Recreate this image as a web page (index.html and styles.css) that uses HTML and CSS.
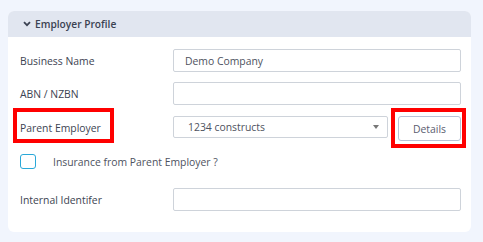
FILE: index.html
```html
<!DOCTYPE html>
<html>
<head>
<meta charset="utf-8">
<link rel="stylesheet" href="styles.css">
</head>
<body>
<div class="card">
  <div class="card-header">
    <svg class="chev" width="8" height="6" viewBox="0 0 8 6"><path d="M1 1.2 L4 4.2 L7 1.2" fill="none" stroke="#3b4252" stroke-width="1.8"/></svg>
    <span>Employer Profile</span>
  </div>
  <div class="card-body">
    <div class="row r1">
      <div class="label">Business Name</div>
      <div class="field"><div class="input">Demo Company</div></div>
    </div>
    <div class="row r2">
      <div class="label">ABN / NZBN</div>
      <div class="field"><div class="input"></div></div>
    </div>
    <div class="row r3">
      <div class="label hl-label">Parent Employer</div>
      <div class="field split">
        <div class="select"><span>1234 constructs</span><span class="caret"></span></div>
        <div class="hl-btn"><button class="btn">Details</button></div>
      </div>
    </div>
    <div class="check-row">
      <span class="checkbox"></span>
      <span class="check-label">Insurance from Parent Employer ?</span>
    </div>
    <div class="row">
      <div class="label">Internal Identifer</div>
      <div class="field"><div class="input"></div></div>
    </div>
  </div>
</div>
</body>
</html>
```
FILE: styles.css
```css
html, body { margin: 0; padding: 0; }
body {
  background: #f1f5fd;
  font-family: "Open Sans", "Noto Sans", sans-serif;
  font-size: 10.4px;
  color: #3d4452;
  padding: 11px 12px 10px 8px;
  width: 463px;
}
.card {
  background: #fff;
  border-radius: 6px;
  overflow: hidden;
}
.card-header {
  background: #e1e6f0;
  height: 26px;
  display: flex;
  align-items: center;
  padding-left: 15px;
  gap: 4px;
  font-weight: 600;
  font-size: 10.2px;
  color: #3b4252;
}
.card-body {
  padding: 12px 10px 21px 12px;
}
.row {
  display: flex;
  height: 23px;
}
.r1 { margin-bottom: 10px; }
.r2 { margin-bottom: 11px; }
.r3 { margin-bottom: 15px; }
.label {
  width: 153px;
  flex: none;
  display: flex;
  align-items: center;
  position: relative;
}
.field { flex: 1; }
.input {
  height: 23px;
  box-sizing: border-box;
  border: 1px solid #ced3da;
  border-radius: 2px;
  padding: 0 11px;
  display: flex;
  align-items: center;
  color: #4e5260;
}
.split { display: flex; gap: 10px; align-items: flex-start; }
.select {
  width: 215px;
  height: 22px;
  box-sizing: border-box;
  border: 1px solid #ced3da;
  border-radius: 2px;
  padding: 0 8px 0 14px;
  display: flex;
  align-items: center;
  justify-content: space-between;
  color: #4e5260;
}
.caret {
  width: 0; height: 0;
  border-left: 3.5px solid transparent;
  border-right: 3.5px solid transparent;
  border-top: 4px solid #777;
}
.hl-label::before {
  content: "";
  position: absolute;
  left: -7px; top: -8px;
  width: 101px; height: 35px;
  box-sizing: border-box;
  border: 4px solid #f00;
}
.hl-btn { display: flex; position: relative; }
.hl-btn::before {
  content: "";
  position: absolute;
  left: -7px; top: -8px;
  width: 75px; height: 40px;
  box-sizing: border-box;
  border: 4px solid #f00;
}
.btn {
  width: 63px;
  height: 25px;
  box-sizing: border-box;
  background: #fff;
  border: 1px solid #b8c2d6;
  border-radius: 3px;
  font: inherit;
  color: #5a5d70;
  padding: 0;
  position: relative;
}
.check-row {
  display: flex;
  align-items: center;
  height: 15px;
  margin-bottom: 19px;
}
.checkbox {
  width: 16px; height: 15px;
  box-sizing: border-box;
  border: 1.5px solid #2aa8d8;
  border-radius: 3px;
  flex: none;
}
.check-label {
  margin-left: 17px;
  color: #4e5260;
}
```
